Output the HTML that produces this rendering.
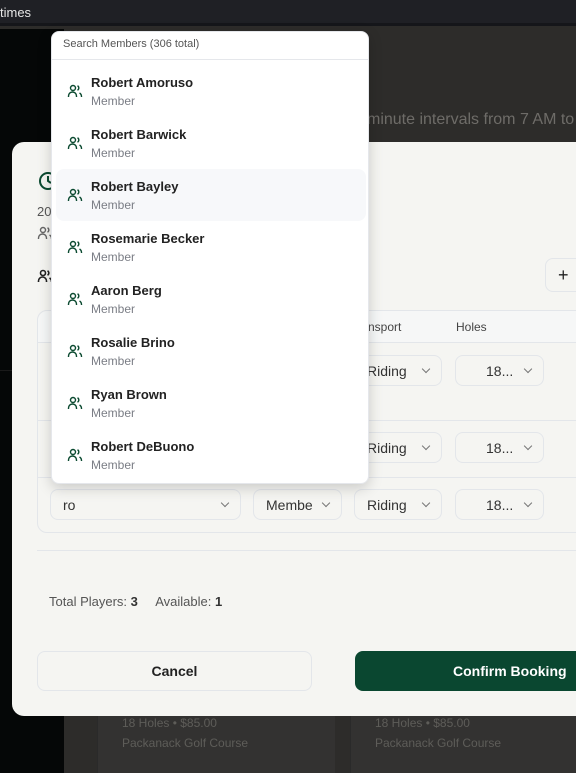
<!DOCTYPE html>
<html><head><meta charset="utf-8"><style>
*{box-sizing:border-box;margin:0;padding:0}
body{width:576px;height:773px;overflow:hidden;position:relative;background:#2d2c2a;font-family:"Liberation Sans",sans-serif}
.abs{position:absolute}
.top{left:0;top:0;width:576px;height:26px;background:#1f2025;border-bottom:3px solid #15161a;color:#e6e6e6;font-size:13px;line-height:26px}
.side{left:0;top:29px;width:64px;height:744px;background:#050707}
.card{top:700px;height:73px;background:#333231;border-left:1px solid #2a2a2a;color:#5e5d59;font-size:12px}
.modal{left:12px;top:142px;width:600px;height:574px;background:#f5f5f2;border-radius:12px}
.sel{position:absolute;height:31px;border:1px solid #e3e6ea;border-radius:8px;background:#f5f5f2;font-size:14px;color:#333;line-height:31px}
.sel:after{content:"";position:absolute;right:12px;top:10px;width:5px;height:5px;border-right:1.3px solid #777;border-bottom:1.3px solid #777;transform:rotate(45deg)}
.dd{left:51px;top:31px;width:318px;height:453px;background:#fff;border-radius:8px;box-shadow:0 4px 14px rgba(0,0,0,.18);border:1px solid #e5e7eb}
.item{position:absolute;left:4px;width:310px;height:52px;border-radius:8px}
.item .n{position:absolute;left:35px;top:10px;font-size:13px;font-weight:bold;color:#222}
.item .m{position:absolute;left:35px;top:29px;font-size:12px;color:#7a7d85}
.item svg{position:absolute;left:11px;top:18px}
</style></head><body>
<div class="abs top">times</div>
<div class="abs side"></div>
<div class="abs" style="left:0;top:370px;width:40px;height:1px;background:#1a1a1a"></div>
<div class="abs" style="left:367px;top:111px;font-size:16px;color:#6e6c68">minute intervals from 7 AM to</div>
<div class="abs card" style="left:97px;width:238px"><div style="position:absolute;left:24px;top:16px">18 Holes • $85.00</div><div style="position:absolute;left:24px;top:36px">Packanack Golf Course</div></div>
<div class="abs card" style="left:350px;width:226px"><div style="position:absolute;left:24px;top:16px">18 Holes • $85.00</div><div style="position:absolute;left:24px;top:36px">Packanack Golf Course</div></div>

<div class="abs modal">
  <svg class="abs" style="left:26px;top:29px" width="20" height="20" viewBox="0 0 20 20"><circle cx="10" cy="10" r="8" fill="none" stroke="#0b4a30" stroke-width="2"/><path d="M10 5v5l3 2" fill="none" stroke="#0b4a30" stroke-width="2"/></svg>
  <div class="abs" style="left:25px;top:62px;font-size:13px;color:#555">20</div>
  <svg class="abs" style="left:25px;top:83px" width="16" height="16" viewBox="0 0 16 16" fill="none" stroke="#666" stroke-width="1.4"><circle cx="6" cy="5" r="2.5"/><path d="M1.5 14v-1a4 4 0 0 1 8 0v1M10.5 2.8a2.5 2.5 0 0 1 0 4.4M12.5 10a4 4 0 0 1 2 3.5v.5"/></svg>
  <svg class="abs" style="left:25px;top:126px" width="16" height="16" viewBox="0 0 16 16" fill="none" stroke="#222" stroke-width="1.6"><circle cx="6" cy="5" r="2.5"/><path d="M1.5 14v-1a4 4 0 0 1 8 0v1M10.5 2.8a2.5 2.5 0 0 1 0 4.4M12.5 10a4 4 0 0 1 2 3.5v.5"/></svg>
  <div class="abs" style="left:533px;top:116px;width:40px;height:34px;border:1px solid #e3e6ea;border-radius:8px;font-size:18px;line-height:32px;padding-left:12px;color:#222">+</div>
  <div class="abs" style="left:25px;top:168px;width:580px;height:223px;border:1px solid #e3e6ea;border-radius:10px">
    <div class="abs" style="left:0;top:0;width:580px;height:32px;background:#f6f7f7;border-bottom:1px solid #e3e6ea;border-radius:10px 10px 0 0"></div>
    <div class="abs" style="left:330px;top:9px;font-size:12px;color:#444">nsport</div>
    <div class="abs" style="left:418px;top:9px;font-size:12px;color:#444">Holes</div>
    <div class="abs" style="left:0;top:109px;width:580px;height:1px;background:#e3e6ea"></div>
    <div class="abs" style="left:0;top:166px;width:580px;height:1px;background:#e3e6ea"></div>
  </div>
  <div class="sel" style="left:342px;top:213px;width:88px;padding-left:12px">Riding</div>
  <div class="sel" style="left:443px;top:213px;width:89px;padding-left:30px">18...</div>
  <div class="sel" style="left:342px;top:290px;width:88px;padding-left:12px">Riding</div>
  <div class="sel" style="left:443px;top:290px;width:89px;padding-left:30px">18...</div>
  <div class="sel" style="left:38px;top:347px;width:191px;padding-left:12px">ro</div>
  <div class="sel" style="left:241px;top:347px;width:89px;padding-left:12px">Membe</div>
  <div class="sel" style="left:342px;top:347px;width:88px;padding-left:12px">Riding</div>
  <div class="sel" style="left:443px;top:347px;width:89px;padding-left:30px">18...</div>
  <div class="abs" style="left:25px;top:408px;width:580px;height:1px;background:#e3e6ea"></div>
  <div class="abs" style="left:37px;top:452px;font-size:13px;color:#555">Total Players: <b style="color:#333">3</b>&nbsp;&nbsp;&nbsp;&nbsp; Available: <b style="color:#333">1</b></div>
  <div class="abs" style="left:25px;top:509px;width:275px;height:40px;border:1px solid #e3e6ea;border-radius:8px;text-align:center;line-height:38px;font-size:14px;font-weight:bold;color:#222">Cancel</div>
  <div class="abs" style="left:343px;top:509px;width:260px;height:40px;background:#0a4730;border-radius:8px;line-height:40px;padding-left:98px;font-size:14px;font-weight:bold;color:#fff">Confirm Booking</div>
</div>

<div class="abs dd">
  <div class="abs" style="left:0;top:0;width:316px;height:28px;border-bottom:1px solid #e5e7eb;font-size:11px;color:#555;padding:6px 0 0 11px">Search Members (306 total)</div>
  <div class="item" style="top:33px"><svg width="16" height="16" viewBox="0 0 16 16" fill="none" stroke="#0b4a30" stroke-width="1.4"><circle cx="6" cy="5" r="2.5"/><path d="M1.5 14v-1a4 4 0 0 1 8 0v1M10.5 2.8a2.5 2.5 0 0 1 0 4.4M12.5 10a4 4 0 0 1 2 3.5v.5"/></svg><div class="n">Robert Amoruso</div><div class="m">Member</div></div>
  <div class="item" style="top:85px"><svg width="16" height="16" viewBox="0 0 16 16" fill="none" stroke="#0b4a30" stroke-width="1.4"><circle cx="6" cy="5" r="2.5"/><path d="M1.5 14v-1a4 4 0 0 1 8 0v1M10.5 2.8a2.5 2.5 0 0 1 0 4.4M12.5 10a4 4 0 0 1 2 3.5v.5"/></svg><div class="n">Robert Barwick</div><div class="m">Member</div></div>
  <div class="item" style="top:137px;background:#f7f8fa"><svg width="16" height="16" viewBox="0 0 16 16" fill="none" stroke="#0b4a30" stroke-width="1.4"><circle cx="6" cy="5" r="2.5"/><path d="M1.5 14v-1a4 4 0 0 1 8 0v1M10.5 2.8a2.5 2.5 0 0 1 0 4.4M12.5 10a4 4 0 0 1 2 3.5v.5"/></svg><div class="n">Robert Bayley</div><div class="m">Member</div></div>
  <div class="item" style="top:189px"><svg width="16" height="16" viewBox="0 0 16 16" fill="none" stroke="#0b4a30" stroke-width="1.4"><circle cx="6" cy="5" r="2.5"/><path d="M1.5 14v-1a4 4 0 0 1 8 0v1M10.5 2.8a2.5 2.5 0 0 1 0 4.4M12.5 10a4 4 0 0 1 2 3.5v.5"/></svg><div class="n">Rosemarie Becker</div><div class="m">Member</div></div>
  <div class="item" style="top:241px"><svg width="16" height="16" viewBox="0 0 16 16" fill="none" stroke="#0b4a30" stroke-width="1.4"><circle cx="6" cy="5" r="2.5"/><path d="M1.5 14v-1a4 4 0 0 1 8 0v1M10.5 2.8a2.5 2.5 0 0 1 0 4.4M12.5 10a4 4 0 0 1 2 3.5v.5"/></svg><div class="n">Aaron Berg</div><div class="m">Member</div></div>
  <div class="item" style="top:293px"><svg width="16" height="16" viewBox="0 0 16 16" fill="none" stroke="#0b4a30" stroke-width="1.4"><circle cx="6" cy="5" r="2.5"/><path d="M1.5 14v-1a4 4 0 0 1 8 0v1M10.5 2.8a2.5 2.5 0 0 1 0 4.4M12.5 10a4 4 0 0 1 2 3.5v.5"/></svg><div class="n">Rosalie Brino</div><div class="m">Member</div></div>
  <div class="item" style="top:345px"><svg width="16" height="16" viewBox="0 0 16 16" fill="none" stroke="#0b4a30" stroke-width="1.4"><circle cx="6" cy="5" r="2.5"/><path d="M1.5 14v-1a4 4 0 0 1 8 0v1M10.5 2.8a2.5 2.5 0 0 1 0 4.4M12.5 10a4 4 0 0 1 2 3.5v.5"/></svg><div class="n">Ryan Brown</div><div class="m">Member</div></div>
  <div class="item" style="top:397px"><svg width="16" height="16" viewBox="0 0 16 16" fill="none" stroke="#0b4a30" stroke-width="1.4"><circle cx="6" cy="5" r="2.5"/><path d="M1.5 14v-1a4 4 0 0 1 8 0v1M10.5 2.8a2.5 2.5 0 0 1 0 4.4M12.5 10a4 4 0 0 1 2 3.5v.5"/></svg><div class="n">Robert DeBuono</div><div class="m">Member</div></div>
</div>
</body></html>
